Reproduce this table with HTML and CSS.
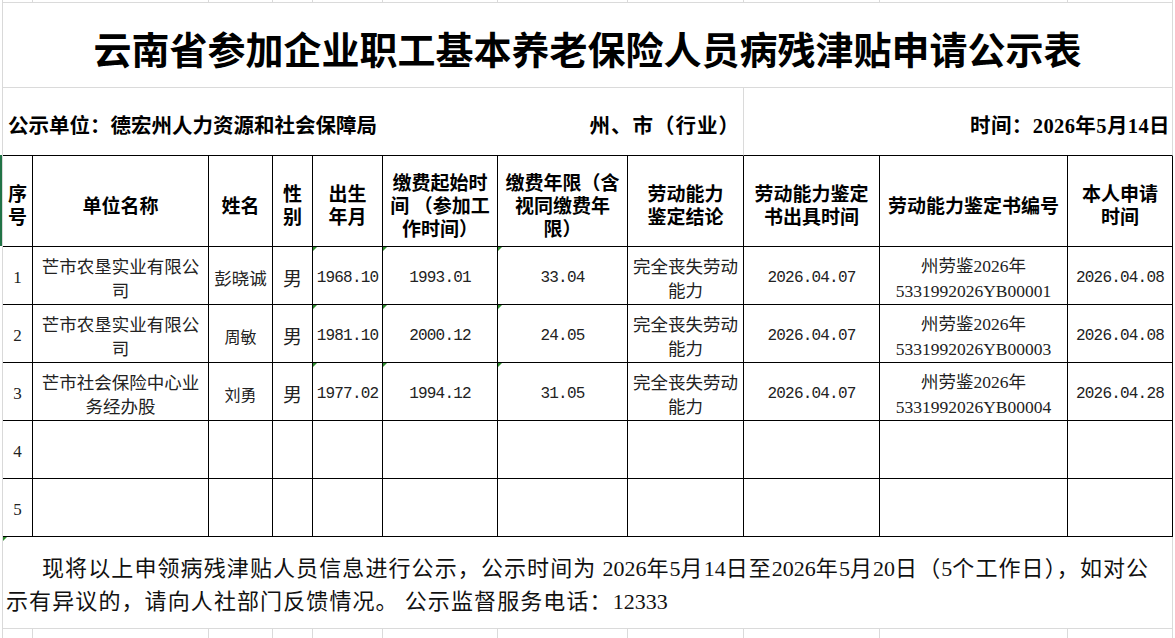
FILE: index.html
```html
<!DOCTYPE html>
<html lang="zh-CN">
<head>
<meta charset="utf-8">
<title>云南省参加企业职工基本养老保险人员病残津贴申请公示表</title>
<link rel="stylesheet" href="styles.css">
</head>
<body>
<div class="sheet">
  <!-- top strip -->
  <div class="g"></div><div class="g"></div><div class="g"></div><div class="g"></div><div class="g"></div><div class="g"></div><div class="g"></div><div class="g"></div><div class="g"></div><div class="g"></div><div class="g"></div>

  <div class="g title"><span>云南省参加企业职工基本养老保险人员病残津贴申请公示表</span></div>

  <div class="info info-unit"><span>公示单位：德宏州人力资源和社会保障局</span></div>
  <div class="info info-area"><span>州、市（行业）</span></div>
  <div class="info info-time"><span>时间：2026年5月14日</span></div>

  <div class="c h first sel"><span>序<br>号</span></div>
  <div class="c h"><span>单位名称</span></div>
  <div class="c h"><span>姓名</span></div>
  <div class="c h"><span>性<br>别</span></div>
  <div class="c h"><span>出生<br>年月</span></div>
  <div class="c h"><span>缴费起始时<br>间 （参加工<br>作时间）</span></div>
  <div class="c h"><span>缴费年限（含<br>视同缴费年<br>限）</span></div>
  <div class="c h"><span>劳动能力<br>鉴定结论</span></div>
  <div class="c h"><span>劳动能力鉴定<br>书出具时间</span></div>
  <div class="c h"><span>劳动能力鉴定书编号</span></div>
  <div class="c h"><span>本人申请<br>时间</span></div>

  <div class="c d first"><span class="sn">1</span></div>
  <div class="c d"><span>芒市农垦实业有限公<br>司</span></div>
  <div class="c d"><span>彭晓诚</span></div>
  <div class="c d"><span class="big">男</span></div>
  <div class="c d mark"><span class="n">1968.10</span></div>
  <div class="c d mark"><span class="n">1993.01</span></div>
  <div class="c d mark"><span class="n">33.04</span></div>
  <div class="c d"><span>完全丧失劳动<br>能力</span></div>
  <div class="c d"><span class="n">2026.04.07</span></div>
  <div class="c d"><span>州劳鉴<span class="t">2026</span>年<br><span class="t">5331992026YB00001</span></span></div>
  <div class="c d"><span class="n">2026.04.08</span></div>

  <div class="c d first"><span class="sn">2</span></div>
  <div class="c d"><span>芒市农垦实业有限公<br>司</span></div>
  <div class="c d"><span class="small">周敏</span></div>
  <div class="c d"><span class="big">男</span></div>
  <div class="c d mark"><span class="n">1981.10</span></div>
  <div class="c d mark"><span class="n">2000.12</span></div>
  <div class="c d mark"><span class="n">24.05</span></div>
  <div class="c d"><span>完全丧失劳动<br>能力</span></div>
  <div class="c d"><span class="n">2026.04.07</span></div>
  <div class="c d"><span>州劳鉴<span class="t">2026</span>年<br><span class="t">5331992026YB00003</span></span></div>
  <div class="c d"><span class="n">2026.04.08</span></div>

  <div class="c d first"><span class="sn">3</span></div>
  <div class="c d"><span>芒市社会保险中心业<br>务经办股</span></div>
  <div class="c d"><span class="small">刘勇</span></div>
  <div class="c d"><span class="big">男</span></div>
  <div class="c d mark"><span class="n">1977.02</span></div>
  <div class="c d mark"><span class="n">1994.12</span></div>
  <div class="c d mark"><span class="n">31.05</span></div>
  <div class="c d"><span>完全丧失劳动<br>能力</span></div>
  <div class="c d"><span class="n">2026.04.07</span></div>
  <div class="c d"><span>州劳鉴<span class="t">2026</span>年<br><span class="t">5331992026YB00004</span></span></div>
  <div class="c d"><span class="n">2026.04.28</span></div>

  <div class="c d first"><span class="sn">4</span></div>
  <div class="c d"></div><div class="c d"></div><div class="c d"></div><div class="c d"></div><div class="c d"></div><div class="c d"></div><div class="c d"></div><div class="c d"></div><div class="c d"></div><div class="c d"></div>

  <div class="c d first"><span class="sn">5</span></div>
  <div class="c d"></div><div class="c d"></div><div class="c d"></div><div class="c d"></div><div class="c d"></div><div class="c d"></div><div class="c d"></div><div class="c d"></div><div class="c d"></div><div class="c d"></div>

  <div class="g note mark"><p>现将以上申领病残津贴人员信息进行公示，公示时间为 <span class="dg">2026</span>年<span class="dg">5</span>月<span class="dg">14</span>日至<span class="dg">2026</span>年<span class="dg">5</span>月<span class="dg">20</span>日（<span class="dg">5</span>个工作日），如对公<br>示有异议的，请向人社部门反馈情况。 公示监督服务电话：<span class="dg">12333</span></p></div>

  <div class="g"></div><div class="g"></div><div class="g"></div><div class="g"></div><div class="g"></div><div class="g"></div><div class="g"></div><div class="g"></div><div class="g"></div><div class="g"></div><div class="g"></div>
</div>
</body>
</html>
```

FILE: styles.css
```css
* {
  box-sizing: border-box;
  margin: 0;
  padding: 0;
}

html, body {
  width: 1175px;
  height: 638px;
  overflow: hidden;
  background: #ffffff;
}

body {
  font-family: "Noto Sans CJK SC", sans-serif;
  color: #000000;
}

.sheet {
  display: grid;
  grid-template-columns: 30px 176px 64px 40px 70px 115px 130px 116px 136px 188px 105px;
  grid-template-rows: 3px 85px 68px 91px repeat(5, 58px) 92px 20px;
  width: 1171px;
  margin-left: 2px;
  border-left: 1px solid #d9d9d9;
}

/* plain spreadsheet gridline cell */
.g {
  border-right: 1px solid #dadada;
  border-bottom: 1px solid #dadada;
}

.title {
  grid-column: 1 / -1;
  display: flex;
  align-items: center;
  justify-content: center;
  padding-top: 5px;
  font-size: 38px;
  font-weight: 700;
  line-height: 1;
  color: #000;
}

.info {
  display: flex;
  align-items: center;
  padding-top: 5px;
  font-family: "Liberation Serif", "Noto Sans CJK SC", serif;
  font-size: 20.5px;
  font-weight: 700;
  border-bottom: 1px solid #000;
}

.info-unit {
  grid-column: 1 / 6;
  padding-left: 5px;
}

.info-area {
  grid-column: 6 / 9;
  justify-content: flex-end;
  padding-right: 3px;
  border-right: 1px solid #dadada;
}

.info-area span {
  letter-spacing: 1px;
}

.info-time {
  grid-column: 9 / 12;
  justify-content: flex-end;
  padding-right: 2px;
  border-right: 1px solid #dadada;
}

.info-time span {
  letter-spacing: 0.4px;
}

/* table cells */
.c {
  position: relative;
  display: flex;
  align-items: center;
  justify-content: center;
  text-align: center;
  border-right: 1px solid #000;
  border-bottom: 1px solid #000;
}

.h {
  font-size: 19px;
  line-height: 23px;
  font-weight: 700;
  padding-top: 6px;
}

.d {
  font-size: 17.5px;
  line-height: 24px;
  color: #222;
  padding-top: 4px;
}

.sel::before {
  content: "";
  position: absolute;
  left: -3px;
  top: -1px;
  bottom: 0;
  width: 2px;
  background: #217346;
}

.mark::before {
  content: "";
  position: absolute;
  left: 0;
  top: 0;
  border-top: 4px solid #2e8b2e;
  border-right: 4px solid transparent;
}

.n {
  font-family: "Liberation Mono", monospace;
  font-size: 16px;
  letter-spacing: -0.8px;
}

.t {
  font-family: "Liberation Serif", serif;
  font-size: 17.5px;
}

.sn {
  font-family: "Liberation Serif", serif;
  font-size: 17px;
}

.small {
  font-size: 16px;
}

.big {
  font-size: 19px;
}

.note {
  position: relative;
  grid-column: 1 / -1;
  display: flex;
  align-items: center;
  padding-left: 3px;
  padding-top: 2px;
}

.note p {
  font-size: 22px;
  line-height: 30px;
  letter-spacing: 1.1px;
  text-indent: 36px;
  white-space: nowrap;
  color: #111;
}

.dg {
  font-family: "Liberation Serif", serif;
  font-size: 22px;
  letter-spacing: 0;
}
```
